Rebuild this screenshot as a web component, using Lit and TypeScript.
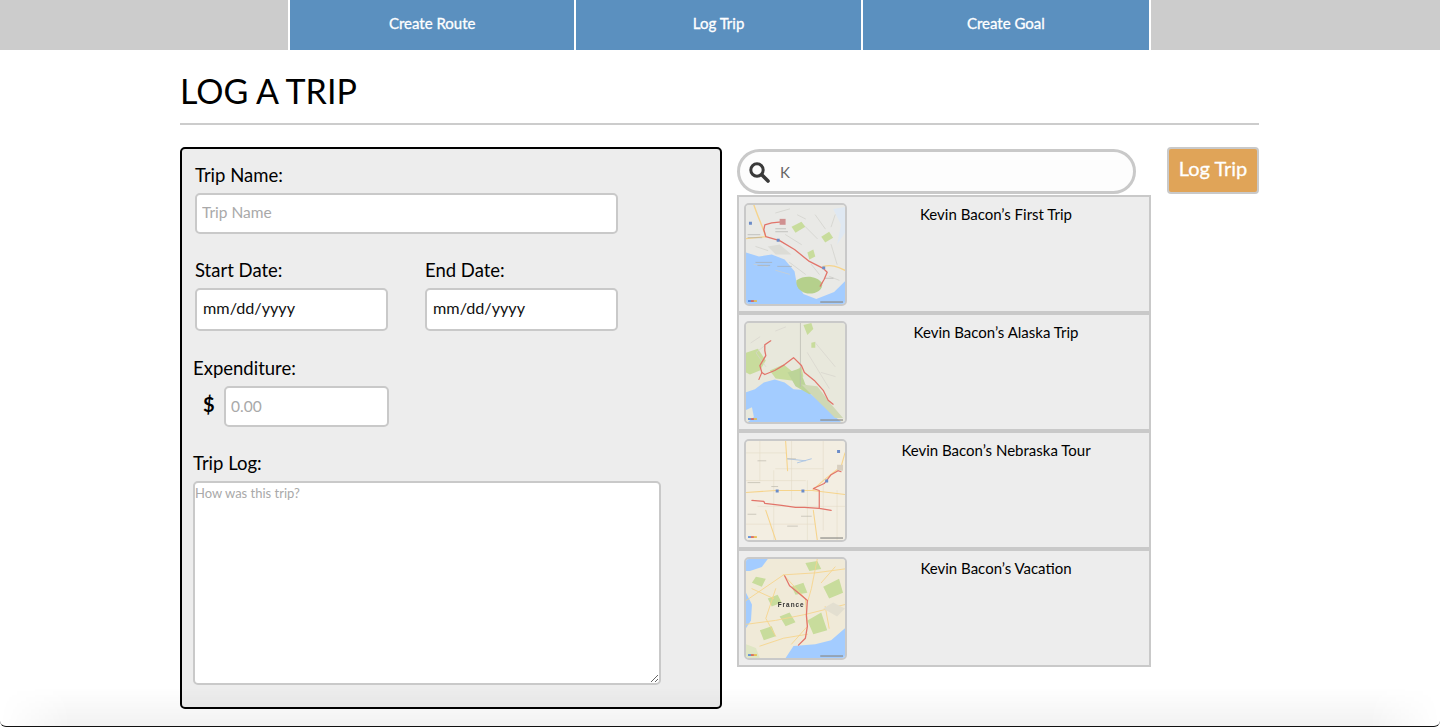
import { LitElement, html, css, svg } from 'lit';
import { customElement, state } from 'lit/decorators.js';

interface MapShape {
  d: string;
  fill?: string;
  stroke?: string;
  width?: number;
}

interface Trip {
  title: string;
  land: string;
  shapes: MapShape[];
  label?: string;
}

const WATER = '#a3ccff';
const GREEN = '#c8dc9c';
const ROAD = '#f6d48c';
const LINE = '#d6d3cc';
const ROUTE = '#e2746a';

const TRIPS: Trip[] = [
  {
    title: 'Kevin Bacon’s First Trip',
    land: '#e9e9e6',
    shapes: [
      { d: 'M0 48L13 52L26 50L39 55L49 67L51 78L58 90L71 95L89 88L100 77V100H0Z', fill: WATER },
      { d: 'M51 76C60 70 72 72 77 79C78 87 68 91 60 89C54 87 50 82 51 76Z', fill: '#b5d08c' },
      { d: 'M46 22L56 17L60 22L50 28Z', fill: GREEN },
      { d: 'M76 32L84 27L88 33L80 38Z', fill: GREEN },
      { d: 'M62 48L68 45L70 52L64 55Z', fill: GREEN },
      { d: 'M22 42L34 40L46 50L30 50Z', fill: '#dcdcd6' },
      { d: 'M88 4L100 2V28L92 40L96 20Z', fill: '#dfe8f2' },
      { d: 'M8 0C12 12 16 20 20 32M0 34L20 32M78 62C86 60 92 62 100 66', stroke: ROAD, width: 1.4 },
      { d: 'M40 30L56 40M60 22L72 34M70 10L80 24M86 40L92 60M30 8L44 4M44 58L60 70M10 42L22 46M84 72L94 76M8 60L22 62M30 66L44 70M66 60L74 70M52 10L60 14M90 10L86 22', stroke: '#cfcfca', width: 0.7 },
      { d: 'M2 30H14M2 33H16M30 24H40M30 27H42M10 58H26M12 61H24M32 62H46M80 74H88', stroke: '#a8a8a4', width: 0.6 },
      { d: 'M36 17L26 18L19 20L18 25L20 32L34 36L49 45L64 57L78 64L82 68L79 75L75 82', stroke: ROUTE, width: 1.3 },
      { d: 'M34 14h6v6h-6z', fill: '#d09090' },
      { d: 'M3 17h3v3H3zM31 34h3v3h-3zM77 62h3v3h-3z', fill: '#6c8cc8' },
    ],
  },
  {
    title: 'Kevin Bacon’s Alaska Trip',
    land: '#e8e8dc',
    shapes: [
      { d: 'M0 70L9 67L18 60L29 57L39 60L48 67L61 68L73 78L83 88L96 100H0Z', fill: WATER },
      { d: 'M0 30L12 26L20 38L14 48L4 52L0 50Z', fill: GREEN },
      { d: 'M24 48L38 42L48 50L56 44L58 54L46 58L30 56Z', fill: GREEN },
      { d: 'M42 50L54 46L60 62L70 70L64 72L50 64Z', fill: '#bcd498' },
      { d: 'M58 2L66 0L68 6L62 12Z', fill: GREEN },
      { d: 'M66 20L70 19L70 25L66 25Z', fill: GREEN },
      { d: 'M56 62L72 64L86 82L98 96L90 96L76 82Z', fill: '#cfd8b4' },
      { d: 'M0 88L6 85L8 95L2 100H0Z', fill: '#e8e8dc' },
      { d: 'M55 0V64', stroke: '#b8b8b0', width: 0.7 },
      { d: 'M25 18L10 30L20 44M70 20L90 44M62 30L84 66M5 20L14 14M30 8L40 4M76 50L90 54', stroke: LINE, width: 0.7 },
      { d: 'M25 18L19 22L19 28L20 33L14 43L16 50L19 52L29 48L39 42L48 35L56 43L59 50L69 58L78 68L83 78L88 82', stroke: ROUTE, width: 1.3 },
      { d: 'M16 50L13 57', stroke: ROUTE, width: 1.1 },
    ],
  },
  {
    title: 'Kevin Bacon’s Nebraska Tour',
    land: '#f3eee2',
    shapes: [
      { d: 'M0 12H40M30 28H78M0 40H60M12 66H100M0 84H70M14 0V40M28 30V100M46 0V60M62 40V100M78 0V90M92 50V100', stroke: '#e4dcc8', width: 0.6 },
      { d: 'M0 52L30 50L67 50L100 54M67 50L78 40L88 32L96 26L100 12M40 0L42 30M20 70L30 100M68 70L72 100', stroke: ROAD, width: 1.1 },
      { d: 'M42 18L60 20M52 22L66 18', stroke: '#a8c4e4', width: 0.9 },
      { d: 'M92 24h6v6h-6z', fill: '#d8cfc0' },
      { d: 'M6 60L18 61L19 63L36 65L50 67L59 67L74 68L86 70M74 68L74 50L68 48L79 43L86 34L93 30L96 31', stroke: ROUTE, width: 1.2 },
      { d: 'M30 49h3v3h-3zM56 49h3v3h-3zM92 9h3v3h-3zM80 39h3v3h-3z', fill: '#6c8cc8' },
      { d: 'M2 42H14M12 20H20M42 18H50M26 46H32M56 76H66M2 74H10M42 86H52', stroke: '#bdb8ac', width: 0.7 },
    ],
  },
  {
    title: 'Kevin Bacon’s Vacation',
    land: '#f0ead8',
    shapes: [
      { d: 'M0 0H22L16 8L4 12L0 12Z', fill: WATER },
      { d: 'M0 34L6 46L5 62L0 70Z', fill: WATER },
      { d: 'M48 88L70 86L86 82L100 70V100H40Z', fill: WATER },
      { d: 'M0 86L10 90L14 100H0Z', fill: '#dfe6c4' },
      { d: 'M10 18L20 20L16 28L6 24ZM22 40L32 36L36 44L26 48ZM34 58L44 54L50 64L40 68ZM46 28L58 24L62 34L50 36ZM62 62L76 54L82 72L68 76ZM78 28L94 20L98 34L84 40ZM14 72L26 68L30 78L18 82ZM60 4L72 2L76 10L64 12Z', fill: GREEN },
      { d: 'M0 42L38 16M38 16L70 14L100 10M38 16L60 40L62 68L46 86M0 66L30 62L60 56M60 56L100 46M14 88L38 80L62 76M72 0L66 30L62 44M30 30L20 60L30 78M6 30L28 40M80 48L84 70M90 8L76 24', stroke: ROAD, width: 0.9 },
      { d: 'M78 50L88 44L100 50L92 58Z', fill: '#e3dfd0' },
      { d: 'M39 17L44 27L54 35L62 42L61 57L62 68L60 80L53 87', stroke: ROUTE, width: 1.3 },
    ],
    label: 'France',
  },
];

@customElement('trip-map')
export class TripMap extends LitElement {
  static properties = { trip: { attribute: false } };
  trip!: Trip;

  static styles = css`
    :host {
      display: block;
      flex: none;
      box-sizing: border-box;
      width: 103px;
      height: 103px;
      border: 2px solid #c9c9c9;
      border-radius: 5px;
      overflow: hidden;
    }
    svg {
      display: block;
      width: 100%;
      height: 100%;
      filter: blur(0.35px);
    }
    text {
      font-family: 'Liberation Sans', sans-serif;
      font-size: 6.5px;
      font-weight: 700;
      letter-spacing: 1px;
      fill: #333;
    }
  `;

  render() {
    const t = this.trip;
    return html`<svg viewBox="0 0 100 100" preserveAspectRatio="none">
      <rect width="100" height="100" fill=${t.land}></rect>
      ${t.shapes.map(
        (s) => svg`<path d=${s.d} fill=${s.fill ?? 'none'} stroke=${s.stroke ?? 'none'}
          stroke-width=${s.width ?? 0} stroke-linejoin="round" stroke-linecap="round"></path>`
      )}
      ${t.label ? svg`<text x="32" y="48">${t.label}</text>` : ''}
      <path d="M2 97H5" stroke="#4a80d8" stroke-width="1.6"></path>
      <path d="M5 97H8" stroke="#d8584a" stroke-width="1.6"></path>
      <path d="M8 97H11" stroke="#e8b83c" stroke-width="1.6"></path>
      <path d="M75 98H98" stroke="#8a8a86" stroke-width="1.2"></path>
    </svg>`;
  }
}

@customElement('app-root')
export class AppRoot extends LitElement {
  static styles = css`
    :host {
      display: block;
      position: relative;
      height: 727px;
      overflow: hidden;
      background: #fff;
      color: #000;
      font-family: Lato, 'Noto Sans', sans-serif;
    }
    * {
      box-sizing: border-box;
    }
    .nav {
      display: flex;
      height: 50px;
      padding-left: 288px;
      background: #ccc;
    }
    .nav a {
      width: 286.4px;
      border-left: 2px solid #fff;
      background: #5b90bf;
      color: #fff;
      font-size: 15px;
      line-height: 47px;
      text-align: center;
      -webkit-text-stroke: 0.3px #fff;
    }
    .nav a:last-child {
      width: 290.2px;
      border-right: 2px solid #fff;
    }
    .page {
      width: 1079px;
      margin-left: 180px;
    }
    h1 {
      height: 75px;
      margin: 0;
      padding-top: 20px;
      border-bottom: 2px solid #ccc;
      font-size: 34px;
      font-weight: 400;
      line-height: 42px;
    }
    .columns {
      display: flex;
      align-items: flex-start;
      margin-top: 22px;
    }
    .panel {
      flex: none;
      width: 542px;
      height: 562px;
      padding: 16px 11px;
      border: 2px solid #000;
      border-radius: 5px;
      background: #ededed;
    }
    label {
      display: block;
      margin-top: -1px;
      font-size: 18.5px;
      line-height: 22px;
    }
    input,
    textarea {
      display: block;
      border: 2px solid #c9c9c9;
      border-radius: 5px;
      background: #fff;
      font-family: inherit;
      outline: none;
    }
    input {
      padding: 0 5px 3px;
      font-size: 15.5px;
    }
    input::placeholder,
    textarea::placeholder {
      color: #a9a9a9;
      opacity: 1;
    }
    .name {
      padding-left: 2px;
    }
    .name input {
      width: 423px;
      height: 41px;
      margin-top: 7px;
    }
    .dates {
      display: flex;
      gap: 37px;
      margin-top: 26px;
      padding-left: 2px;
    }
    .dates input {
      width: 193px;
      height: 43px;
      margin-top: 7px;
      padding: 0 5px 5px 6px;
      color: #111;
      font-size: 16.2px;
    }
    .spend {
      margin-top: 27px;
    }
    .amount {
      display: flex;
      align-items: center;
      margin-top: 7px;
      padding-left: 10px;
    }
    .amount span {
      width: 21px;
      margin-top: -6px;
      font-size: 20px;
      font-weight: 700;
    }
    .amount input {
      width: 165px;
      height: 41px;
      padding-bottom: 1px;
    }
    .log {
      margin-top: 26px;
    }
    textarea {
      width: 468px;
      height: 204px;
      margin-top: 7px;
      padding: 2px 0 0;
      font-size: 13px;
    }
    .results {
      flex: none;
      width: 414px;
      margin-left: 15px;
    }
    .search {
      display: flex;
      align-items: center;
      width: 399px;
      height: 45px;
      margin: 2px 0 1px;
      padding-left: 8px;
      border: 3px solid #c9c9c9;
      border-radius: 23px;
      background: #fdfdfd;
      color: #666;
      font-size: 15px;
    }
    .search svg {
      width: 22px;
      height: 22px;
      margin-right: 10px;
    }
    .items {
      display: flex;
      flex-direction: column;
    }
    .item {
      display: flex;
      height: 118px;
      padding: 6px 5px;
      border: 2px solid #c9c9c9;
      background: #ededed;
    }
    .item span {
      flex: 1;
      padding-top: 1px;
      padding-left: 1px;
      font-size: 15px;
      line-height: 20px;
      text-align: center;
    }
    button {
      flex: none;
      width: 92px;
      height: 47px;
      margin-left: 16px;
      padding: 0 0 5px;
      border: 2px solid #c9c9c9;
      border-radius: 4px;
      background: #e0a458;
      color: #fff;
      font-family: inherit;
      font-size: 20px;
      -webkit-text-stroke: 0.3px #fff;
    }
    .edge {
      position: absolute;
      left: 0;
      right: 0;
      bottom: 0;
      height: 40px;
      border-bottom: 1.5px solid #111;
      border-radius: 0 0 6px 6px;
      overflow: hidden;
      pointer-events: none;
    }
    .edge div {
      height: 100%;
      background: linear-gradient(to bottom, rgba(0, 0, 0, 0), rgba(0, 0, 0, 0.05));
      -webkit-mask-image: linear-gradient(to right, transparent, #000 70px, #000 calc(100% - 70px), transparent);
      mask-image: linear-gradient(to right, transparent, #000 70px, #000 calc(100% - 70px), transparent);
    }
  `;

  @state()
  private _query = 'K';

  render() {
    return html`
      <nav class="nav">
        <a>Create Route</a>
        <a>Log Trip</a>
        <a>Create Goal</a>
      </nav>
      <main class="page">
        <h1>LOG A TRIP</h1>
        <div class="columns">
          <form class="panel">
            <div class="name">
              <label>Trip Name:</label>
              <input placeholder="Trip Name" />
            </div>
            <div class="dates">
              <div>
                <label>Start Date:</label>
                <input value="mm/dd/yyyy" />
              </div>
              <div>
                <label>End Date:</label>
                <input value="mm/dd/yyyy" />
              </div>
            </div>
            <div class="spend">
              <label>Expenditure:</label>
              <div class="amount">
                <span>$</span>
                <input placeholder="0.00" />
              </div>
            </div>
            <div class="log">
              <label>Trip Log:</label>
              <textarea placeholder="How was this trip?"></textarea>
            </div>
          </form>
          <section class="results">
            <div class="search">
              <svg viewBox="0 0 22 22" fill="none" stroke="#3a3a3a">
                <circle cx="9" cy="9" r="6.2" stroke-width="3"></circle>
                <path d="M14 14L20 20" stroke-width="3.6" stroke-linecap="round"></path>
              </svg>
              ${this._query}
            </div>
            <div class="items">
              ${TRIPS.map(
                (trip) => html`
                  <div class="item">
                    <trip-map .trip=${trip}></trip-map>
                    <span>${trip.title}</span>
                  </div>
                `
              )}
            </div>
          </section>
          <button type="button">Log Trip</button>
        </div>
      </main>
      <div class="edge"><div></div></div>
    `;
  }
}
